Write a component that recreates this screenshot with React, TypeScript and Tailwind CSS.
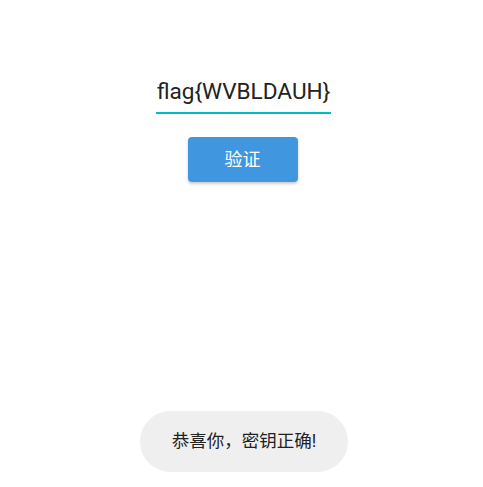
export default function App() {
  return (
    <div className="relative h-[487px] w-[483px] bg-white font-['Roboto','Noto_Sans_CJK_SC',sans-serif]">
      <div className="flex flex-col items-center pl-[4px] pt-[78px]">
        <div className="flex w-[175px] flex-col items-center">
          <input
            className="w-full bg-transparent pb-[6px] text-center text-[22.6px] leading-[28px] text-[#222] outline-none"
            defaultValue="flag{WVBLDAUH}"
          />
          <div className="h-[2px] w-full bg-[#00bcc4]" />
        </div>
        <button className="mr-[2px] mt-[23px] h-[45px] w-[110px] rounded-[4px] bg-[#4196e0] text-[18px] text-white shadow-[0_2px_3px_rgba(0,0,0,0.2)]">
          验证
        </button>
      </div>
      <div className="absolute left-[140px] top-[411px] flex h-[61px] w-[208px] items-center justify-center rounded-full bg-[#efefef] text-[17.5px] text-[#222]">
        恭喜你，密钥正确!
      </div>
    </div>
  );
}
